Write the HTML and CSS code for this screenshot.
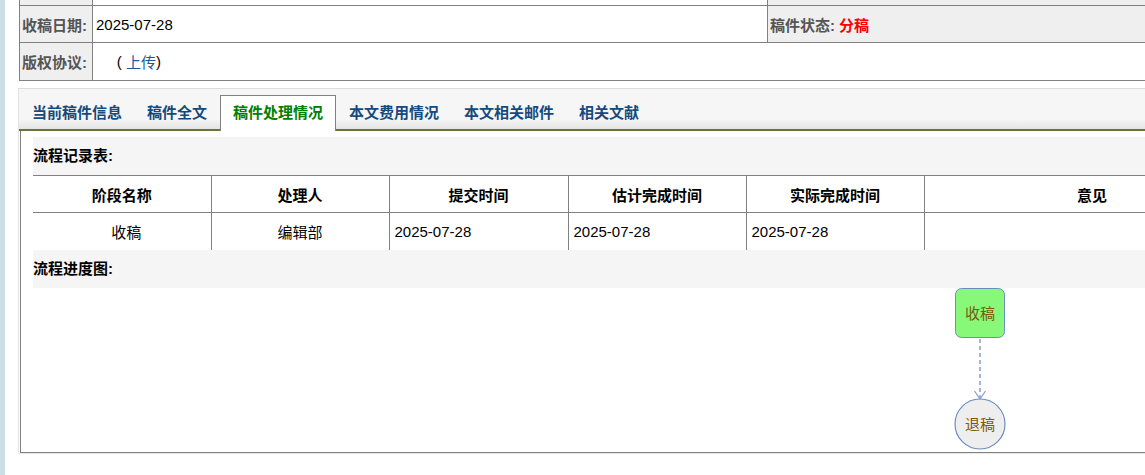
FILE: index.html
```html
<!DOCTYPE html>
<html lang="zh-CN">
<head>
<meta charset="utf-8">
<title>稿件处理情况</title>
<link rel="stylesheet" href="styles.css">
</head>
<body>
<div class="strip"></div>
<div class="main">
  <div class="info">
    <div class="row r-ghost">
      <div class="cell label"></div>
      <div class="cell value"></div>
      <div class="cell status"></div>
    </div>
    <div class="row r1">
      <div class="cell label">收稿日期:</div>
      <div class="cell value">2025-07-28</div>
      <div class="cell status">稿件状态: <span class="red">分稿</span></div>
    </div>
    <div class="row r2">
      <div class="cell label">版权协议:</div>
      <div class="cell value wide">&nbsp;&nbsp;&nbsp;&nbsp;&nbsp;(&nbsp; <a class="link" href="#">上传</a>)</div>
    </div>
  </div>

  <div class="tabbox">
    <div class="tabbar">
      <div class="tab">当前稿件信息</div>
      <div class="tab">稿件全文</div>
      <div class="tab active">稿件处理情况</div>
      <div class="tab">本文费用情况</div>
      <div class="tab">本文相关邮件</div>
      <div class="tab">相关文献</div>
    </div>
    <div class="panel">
      <div class="heading">流程记录表:</div>
      <table class="flow">
        <colgroup>
          <col class="c1"><col class="c2"><col class="c3"><col class="c4"><col class="c5"><col class="c6">
        </colgroup>
        <thead>
          <tr>
            <th>阶段名称</th><th>处理人</th><th>提交时间</th><th>估计完成时间</th><th>实际完成时间</th><th>意见</th>
          </tr>
        </thead>
        <tbody>
          <tr>
            <td class="center first">收稿</td><td class="center">编辑部</td><td>2025-07-28</td><td>2025-07-28</td><td>2025-07-28</td><td></td>
          </tr>
        </tbody>
      </table>
      <div class="heading">流程进度图:</div>
      <div class="diagram">
        <svg class="chart" width="1100" height="164" viewBox="0 0 1100 164" xmlns="http://www.w3.org/2000/svg">
          <rect x="922.5" y="0.5" width="49" height="49" rx="6" ry="6" fill="#88f878" stroke="#6c8ebf" stroke-width="1"/>
          <text x="947" y="31" text-anchor="middle" class="nodetext">收稿</text>
          <line x1="947" y1="51" x2="947" y2="110" stroke="#8ea3d3" stroke-width="1.6" stroke-dasharray="4 3"/>
          <polyline points="941.5,103 947,111 952.5,103" fill="none" stroke="#8ea3d3" stroke-width="1.3"/>
          <circle cx="947" cy="136" r="25" fill="#eeeeee" stroke="#6c8ebf" stroke-width="1.2"/>
          <text x="947" y="142" text-anchor="middle" class="nodetext">退稿</text>
        </svg>
      </div>
    </div>
  </div>
</div>
</body>
</html>
```
FILE: styles.css
```css
html, body {
  margin: 0;
  padding: 0;
  overflow: hidden;
  background: #ffffff;
}
body {
  display: flex;
  align-items: stretch;
  min-height: 475px;
  font-family: "Liberation Sans", "Noto Sans CJK SC", sans-serif;
  font-size: 15px;
  color: #000;
}
.strip {
  width: 5px;
  flex: none;
  background: #c9dfe3;
}
.main {
  margin-left: 14px;
  margin-top: -32px;
  width: 1300px;
  flex: none;
}

/* info table */
.info {
  border-left: 1px solid #808080;
}
.row {
  display: flex;
  box-sizing: border-box;
  height: 38px;
  border-bottom: 1px solid #808080;
}
.r1 { height: 37px; }
.r2 { height: 38px; }
.cell {
  box-sizing: border-box;
  height: 100%;
  display: flex;
  align-items: center;
  white-space: nowrap;
}
.label {
  width: 73px;
  border-right: 1px solid #808080;
  background: #efefef;
  color: #555555;
  font-weight: bold;
  padding-left: 2px;
}
.value {
  width: 675px;
  border-right: 1px solid #808080;
  padding-left: 3px;
}
.value.wide {
  flex: 1;
  border-right: none;
}
.status {
  flex: 1;
  background: #efefef;
  color: #555555;
  font-weight: bold;
  padding-left: 2px;
}
.red {
  color: #ff0000;
  margin-left: 4px;
}
.link {
  color: #1a5a96;
  text-decoration: none;
}

/* tabs */
.tabbox {
  margin-top: 7px;
  margin-left: -1px;
  border-top: 1px solid #dcdcdc;
  border-left: 1px solid #e4e4e4;
  border-bottom: 1px solid #e8e8e8;
}
.tabbar {
  display: flex;
  align-items: flex-end;
  height: 40px;
  padding-left: 0;
  background: linear-gradient(to bottom, #f6f6f6 0%, #f6f6f6 75%, #e4e4e4 100%);
  border-bottom: 2px solid #6c7536;
}
.tab {
  box-sizing: border-box;
  height: 36px;
  margin-bottom: -2px;
  padding: 0 11px 0 12px;
  border: 1px solid transparent;
  border-bottom: none;
  line-height: 34px;
  font-weight: bold;
  color: #154a7e;
  white-space: nowrap;
}
.tab.active {
  background: #ffffff;
  border-color: #808080;
  color: #008000;
  margin-left: 1px;
  padding-right: 12px;
}

/* panel */
.panel {
  margin-left: 1px;
  border-left: 1px solid #808080;
  border-bottom: 1px solid #808080;
  padding: 6px 0 0 12px;
}
.heading {
  height: 38px;
  line-height: 38px;
  background: #f5f5f5;
  font-weight: bold;
}
.flow {
  border-collapse: collapse;
  table-layout: fixed;
  width: 1227px;
}
.c1, .c2, .c4, .c5 { width: 178px; }
.c3 { width: 179px; }
.c6 { width: 336px; }
.flow th, .flow td {
  border: 1px solid #808080;
  padding: 0 0 0 5px;
  text-align: left;
  font-weight: normal;
  white-space: nowrap;
}
.flow th {
  height: 36px;
  font-weight: bold;
  text-align: center;
  padding: 0;
}
.flow td {
  height: 37px;
  border-bottom: none;
}
.flow tr > :first-child { border-left: none; }
.flow td.center {
  text-align: center;
  padding: 0;
}
.flow td.first {
  padding-left: 9px;
}
.diagram {
  height: 164px;
}
.chart {
  display: block;
}
.nodetext {
  font-family: "Noto Sans CJK SC", sans-serif;
  font-size: 15px;
  fill: #7a5a08;
}
```
